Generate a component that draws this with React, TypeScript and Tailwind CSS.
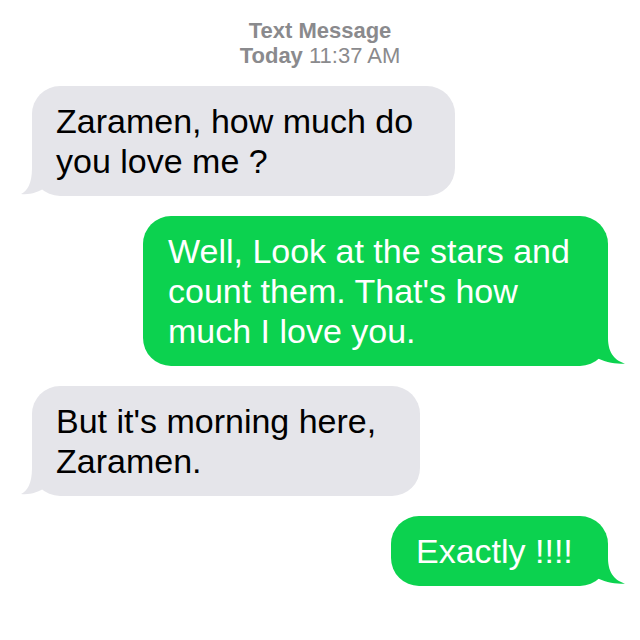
import React from "react";

const GRAY = "#e5e5ea";
const GREEN = "#0cd24f";

function LeftTail() {
  return (
    <svg
      className="absolute bottom-0 left-[-11px]"
      width="34"
      height="30"
      viewBox="0 0 34 30"
    >
      <path
        d="M13 2 L11 2 C11 18 6 25 0 28 C8 29 18 26.5 25 21 L25 2 Z"
        fill={GRAY}
      />
    </svg>
  );
}

function RightTail() {
  return (
    <svg
      className="absolute bottom-0 right-[-17px]"
      width="34"
      height="30"
      viewBox="0 0 34 30"
    >
      <path
        d="M15 2 L17 2 C17 18 25 25 34 27.5 C25 28.5 13 26 4 21 L4 2 Z"
        fill={GREEN}
      />
    </svg>
  );
}

function Left({ w, lines }: { w: string; lines: string[] }) {
  return (
    <div className="flex pl-[32px]">
      <div
        className={`relative ${w} rounded-[28px] bg-[#e5e5ea] pl-[24px] py-[15px] text-[34px] leading-[40px] text-black whitespace-nowrap`}
      >
        <LeftTail />
        <div className="relative">
          {lines.map((l, i) => (
            <div key={i}>{l}</div>
          ))}
        </div>
      </div>
    </div>
  );
}

function Right({ w, lines }: { w: string; lines: string[] }) {
  return (
    <div className="flex justify-end pr-[32px]">
      <div
        className={`relative ${w} rounded-[28px] bg-[#0cd24f] pl-[25px] py-[15px] text-[34px] leading-[40px] text-white whitespace-nowrap`}
      >
        <RightTail />
        <div className="relative">
          {lines.map((l, i) => (
            <div key={i}>{l}</div>
          ))}
        </div>
      </div>
    </div>
  );
}

export default function App() {
  return (
    <div
      className="w-[640px] h-[640px] bg-white overflow-hidden"
      style={{ fontFamily: '"Liberation Sans", Arial, sans-serif' }}
    >
      <div className="pt-[18px] text-center text-[22px] leading-[25px] text-[#8a8a8d]">
        <div className="font-bold">Text Message</div>
        <div>
          <span className="font-bold">Today</span> 11:37 AM
        </div>
      </div>
      <div className="mt-[18px] flex flex-col gap-[20px]">
        <Left w="w-[423px]" lines={["Zaramen, how much do", "you love me ?"]} />
        <Right
          w="w-[465px]"
          lines={[
            "Well, Look at the stars and",
            "count them. That's how",
            "much I love you.",
          ]}
        />
        <Left w="w-[388px]" lines={["But it's morning here,", "Zaramen."]} />
        <Right w="w-[217px]" lines={["Exactly !!!!"]} />
      </div>
    </div>
  );
}
